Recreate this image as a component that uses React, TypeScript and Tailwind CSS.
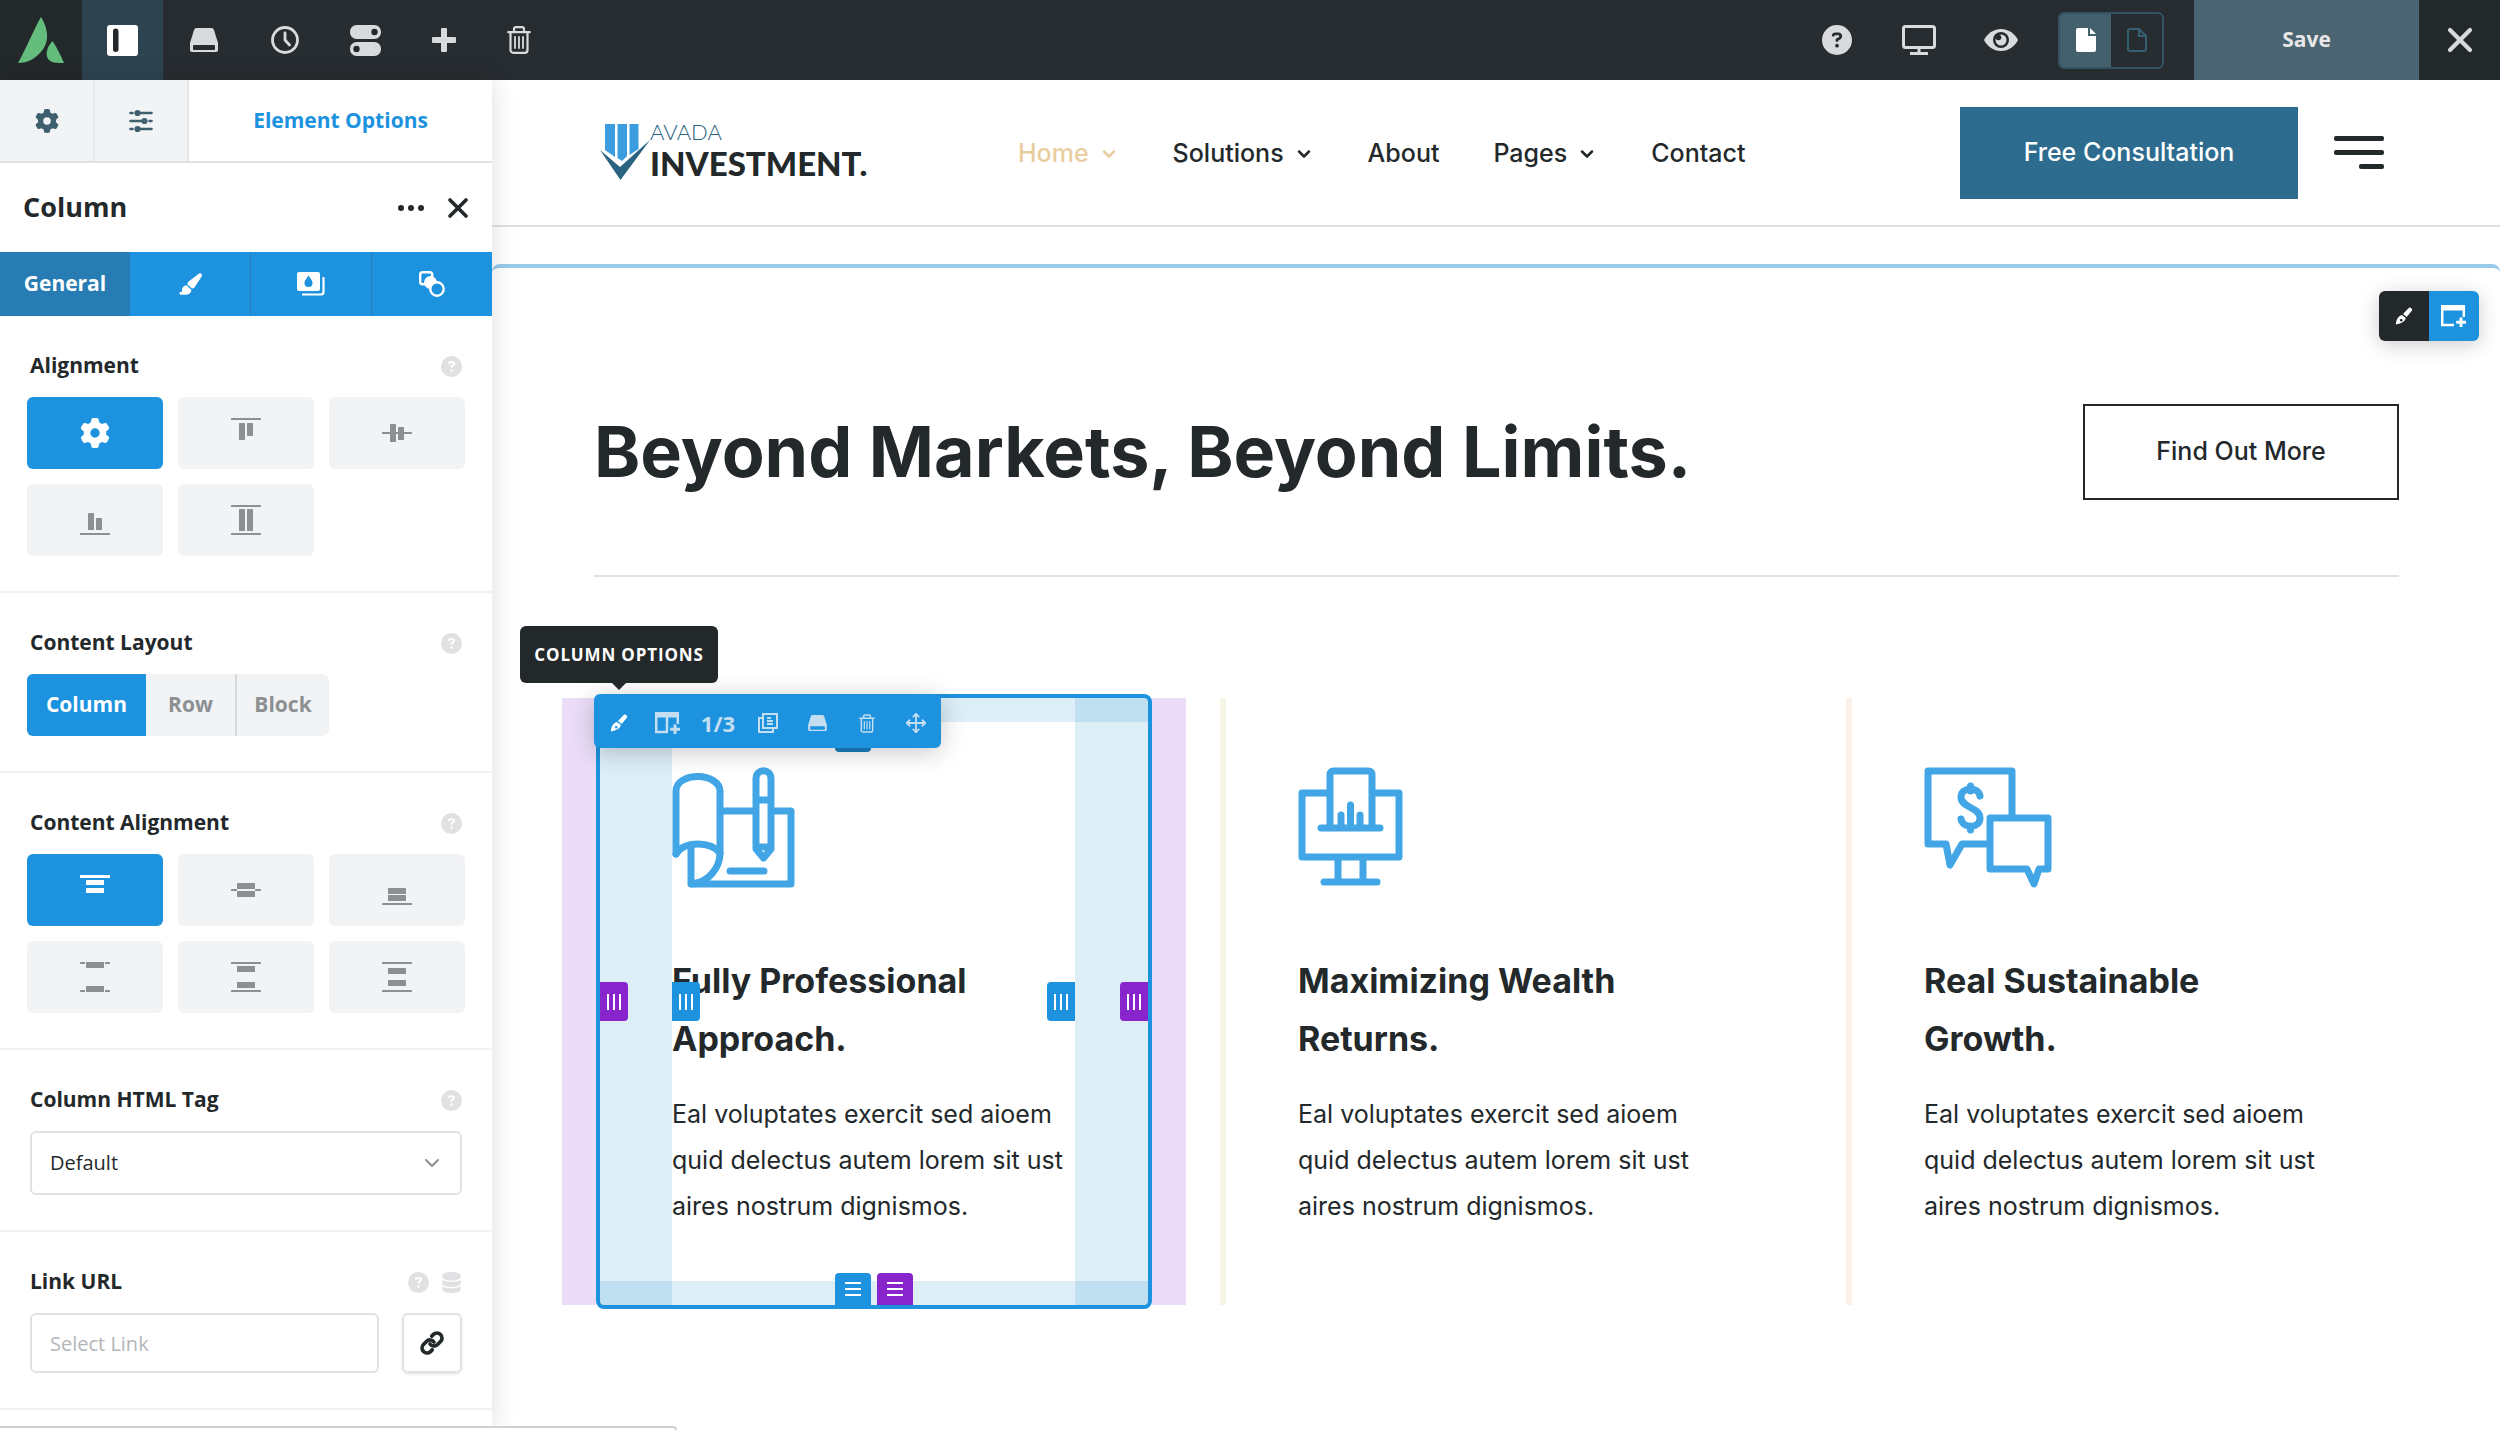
import type { ReactNode } from 'react'
import { FaCircleQuestion, FaDatabase, FaGear, FaPaintbrush } from 'react-icons/fa6'
import { ChevronDown, Link, Move, X } from 'lucide-react'

type Rect = [x: number, y: number, w: number, h: number]

const alignment: Rect[][] = [
  [[0, 0, 30, 2], [8, 5, 6, 17], [16, 5, 6, 13]],
  [[0, 14, 30, 2], [8, 6, 6, 18], [16, 9, 6, 13]],
  [[0, 28, 30, 2], [8, 8, 6, 17], [16, 13, 6, 12]],
  [[0, 0, 30, 2], [0, 28, 30, 2], [8, 4, 6, 22], [16, 4, 6, 22]],
]

const contentAlignment: Rect[][] = [
  [[0, 0, 30, 3], [6, 5, 18, 5], [6, 13, 18, 5]],
  [[0, 14, 6, 2], [24, 14, 6, 2], [6, 8, 18, 6], [6, 16, 18, 6]],
  [[0, 28, 30, 2], [6, 13, 18, 6], [6, 20, 18, 6]],
  [[0, 0, 5, 2], [25, 0, 5, 2], [6, 0, 18, 6], [0, 28, 5, 2], [25, 28, 5, 2], [6, 24, 18, 6]],
  [[0, 0, 30, 2], [0, 28, 30, 2], [6, 4, 18, 6], [6, 20, 18, 6]],
  [[0, 0, 30, 2], [0, 28, 30, 2], [6, 6, 18, 6], [6, 18, 18, 6]],
]

const body = 'Eal voluptates exercit sed aioem quid delectus autem lorem sit ust aires nostrum dignismos.'

function BarsIcon({ rects }: { rects: Rect[] }) {
  return (
    <svg viewBox="0 0 30 30" className="size-[30px]" fill="currentColor">
      {rects.map(([x, y, width, height], i) => (
        <rect key={i} x={x} y={y} width={width} height={height} rx="0.5" />
      ))}
    </svg>
  )
}

function DriveIcon({ className }: { className: string }) {
  return (
    <svg viewBox="0 0 28 24" className={className} fill="currentColor">
      <path d="M7 0h14a3 3 0 0 1 3 2l4 13H0L4 2a3 3 0 0 1 3-2z" />
      <path
        fillRule="evenodd"
        d="M0 14h28v8a2 2 0 0 1-2 2H2a2 2 0 0 1-2-2zM4 17a1 1 0 0 0-1 1v3a1 1 0 0 0 1 1h20a1 1 0 0 0 1-1v-3a1 1 0 0 0-1-1z"
      />
    </svg>
  )
}

function TrashIcon({ className }: { className: string }) {
  return (
    <svg viewBox="0 0 24 28" className={className} fill="none" stroke="currentColor" strokeWidth="2.2" strokeLinecap="round" strokeLinejoin="round">
      <path d="M1.2 6.2h21.6M7 6V3.200a2 2 0 0 1 2-2h6a2 2 0 0 1 2 2V6M3.500 6.500v17.500a2.800 2.800 0 0 0 2.800 2.800h11.400a2.800 2.800 0 0 0 2.800-2.800V6.500" />
      <path strokeWidth="1.800" d="M8 11v11M12 11v11M16 11v11" />
    </svg>
  )
}

function PenIcon() {
  return (
    <svg viewBox="0 0 18 18" className="size-[18px]" fill="currentColor">
      <path d="M14 .8c1.200-1 3.900 1 3 2.700L11.700 10 8 7z" />
      <path fillRule="evenodd" d="M7 8l3.800 3.100c-.6 3-3.800 5.600-10 6.400C1.300 12 3.500 8.800 7 8zm-.8 4a1.300 1.300 0 1 0 .1 2.600 1.300 1.300 0 0 0-.1-2.600z" />
    </svg>
  )
}

function AddContainerIcon({ split, className }: { split?: boolean; className: string }) {
  return (
    <svg viewBox="0 0 26 22" className={className} fill="none" stroke="currentColor" strokeWidth="2.500">
      <path d="M13 19.900H1.200V1.100h21.600V12" />
      <path fill="currentColor" stroke="none" d="M0 0h24v5.500H0z" />
      {split && <path d="M12 4v16" />}
      <path strokeWidth="3" d="M20 12.500v9.500M15.200 17.200H25" />
    </svg>
  )
}

function BarButton({ label, active, children }: { label: string; active?: boolean; children: ReactNode }) {
  return (
    <button aria-label={label} className={active ? 'flex w-[81px] items-center justify-center bg-[#2d434f] text-white' : 'flex w-[81px] items-center justify-center text-[#d9dadc]'}>
      {children}
    </button>
  )
}

function TopBar() {
  return (
    <header className="flex h-20 shrink-0 bg-[#272c30] text-[#d9dadc]">
      <a href="#" aria-label="Avada" className="flex w-[82px] items-center justify-center bg-[#23282b]">
        <svg viewBox="0 0 46 46" className="size-[46px]" fill="#65bd7d">
          <path d="M23 0c8 13 9 27-2 37-6 6-13 9-21 9C8 32 16 12 23 0z" />
          <path d="M34.500 24c4 6 8 14 11.500 22-7 0-12 0-15-3-4-4-3-12 3.500-19z" />
        </svg>
      </a>
      <BarButton label="Toggle sidebar" active>
        <svg viewBox="0 0 31 31" className="size-[31px]">
          <rect width="31" height="31" rx="3" fill="#fff" />
          <rect x="6" y="3.500" width="5.500" height="23.500" rx="2.700" fill="#23282b" />
        </svg>
      </BarButton>
      <BarButton label="Library"><DriveIcon className="h-6 w-7" /></BarButton>
      <BarButton label="History">
        <svg viewBox="0 0 28 28" className="size-7" fill="none" stroke="currentColor" strokeWidth="2.800" strokeLinecap="round" strokeLinejoin="round">
          <circle cx="14" cy="14" r="12.500" />
          <path d="M14 7v7l4.500 5" />
        </svg>
      </BarButton>
      <BarButton label="Preferences">
        <svg viewBox="0 0 31 31" className="size-[31px]">
          <rect width="31" height="14" rx="6.500" fill="currentColor" />
          <rect y="17" width="31" height="14" rx="6.500" fill="currentColor" />
          <circle cx="24.500" cy="7" r="3.200" fill="#23282b" />
          <circle cx="6.500" cy="24" r="3.200" fill="#23282b" />
        </svg>
      </BarButton>
      <button aria-label="Add" className="flex w-[75px] items-center justify-center">
        <svg viewBox="0 0 24 24" className="size-6" fill="currentColor">
          <path d="M9 1a1 1 0 0 1 1-1h4a1 1 0 0 1 1 1v8h8a1 1 0 0 1 1 1v4a1 1 0 0 1-1 1h-8v8a1 1 0 0 1-1 1h-4a1 1 0 0 1-1-1v-8H1a1 1 0 0 1-1-1v-4a1 1 0 0 1 1-1h8z" />
        </svg>
      </button>
      <button aria-label="Clear layout" className="flex w-[75px] items-center justify-center"><TrashIcon className="h-7 w-6" /></button>
      <div className="flex flex-1 items-center justify-end">
        <button aria-label="Help" className="flex w-20 justify-center"><FaCircleQuestion className="size-[30px]" /></button>
        <button aria-label="Responsive view" className="flex w-[83px] justify-center">
          <svg viewBox="0 0 34 30" className="h-[30px] w-[34px]" fill="none" stroke="currentColor" strokeWidth="3">
            <rect x="1.500" y="1.500" width="31" height="21" rx="2" />
            <path d="M17 23v5M8 28.500h18" />
          </svg>
        </button>
        <button aria-label="Preview" className="flex w-[82px] justify-center">
          <svg viewBox="0 0 34 22" className="h-[22px] w-[34px]">
            <path d="M17 0c8 0 14 5 17 11-3 6-9 11-17 11S3 17 0 11C3 5 9 0 17 0z" fill="currentColor" />
            <circle cx="17" cy="11" r="8" fill="#23282b" />
            <circle cx="17" cy="11" r="5.500" fill="currentColor" />
            <circle cx="14.500" cy="8.500" r="2.800" fill="#23282b" />
          </svg>
        </button>
        <div className="mx-4 flex h-[57px] w-[106px] overflow-hidden rounded-md border-2 border-[#345361]">
          <button aria-label="Published" className="flex flex-1 items-center justify-center bg-[#44606d] text-white">
            <svg viewBox="0 0 20 24" className="h-6 w-5" fill="currentColor">
              <path d="M2 0h10v8h8v14a2 2 0 0 1-2 2H2a2 2 0 0 1-2-2V2a2 2 0 0 1 2-2z" />
              <path d="M14 0l6 6h-6z" />
            </svg>
          </button>
          <button aria-label="Draft" className="flex flex-1 items-center justify-center text-[#345f70]">
            <svg viewBox="0 0 20 24" className="h-6 w-5" fill="none" stroke="currentColor" strokeWidth="2">
              <path d="M1 3a2 2 0 0 1 2-2h9l7 7v13a2 2 0 0 1-2 2H3a2 2 0 0 1-2-2zM12 1v7h7" />
            </svg>
          </button>
        </div>
        <button className="ml-[14px] h-full w-[225px] bg-[#4a6471] text-[21px] font-bold text-[#e8e6e6]">Save</button>
        <button aria-label="Close" className="flex h-full w-[81px] items-center justify-center bg-[#23282b]">
          <X className="size-10" strokeWidth={2.5} />
        </button>
      </div>
    </header>
  )
}

function Field({ title, htmlFor, extra, children }: { title: string; htmlFor?: string; extra?: ReactNode; children: ReactNode }) {
  return (
    <section className="border-b-2 border-[#f2f2f4] px-[27px] pt-9 pb-[35px]">
      <div className="mb-[17px] flex h-7 items-center justify-between px-[3px]">
        {htmlFor ? <label htmlFor={htmlFor} className="text-[21px] font-bold">{title}</label> : <h3 className="text-[21px] font-bold">{title}</h3>}
        <span className="flex gap-3 text-[#e0e1e3]">
          <FaCircleQuestion className="size-[21px]" />
          {extra}
        </span>
      </div>
      {children}
    </section>
  )
}

function Tile({ label, active, children }: { label: string; active?: boolean; children: ReactNode }) {
  return (
    <button aria-label={label} className={active ? 'flex h-[72px] items-center justify-center rounded-md bg-[#1d92de] text-white' : 'flex h-[72px] items-center justify-center rounded-md bg-[#f2f3f5] text-[#8c9092]'}>
      {children}
    </button>
  )
}

function Sidebar() {
  return (
    <aside className="relative z-10 w-[492px] shrink-0 bg-white text-[#23282b] shadow-[0_0_24px_rgba(0,0,0,0.14)]">
      <nav className="flex h-[83px] border-b-2 border-[#e0e1e3] text-[#3e5f6e]">
        <button aria-label="Settings" className="flex w-[95px] items-center justify-center border-r-2 border-[#e6e7e9] bg-[#f2f3f5]"><FaGear className="size-6" /></button>
        <button aria-label="Page options" className="flex w-[94px] items-center justify-center border-r-2 border-[#e6e7e9] bg-[#f2f3f5]">
          <svg viewBox="0 0 24 24" className="size-6" fill="none" stroke="currentColor" strokeWidth="2.600" strokeLinecap="round">
            <path d="M1.500 4h2M9 4h13.500M1.500 12h13M20.500 12h2M1.500 20h2M9 20h13.500" />
            <circle cx="8.500" cy="4" r="1.800" />
            <circle cx="15.500" cy="12" r="1.800" />
            <circle cx="8.500" cy="20" r="1.800" />
          </svg>
        </button>
        <button className="flex-1 text-[21px] font-bold text-[#1d92de]">Element Options</button>
      </nav>
      <div className="flex h-[89px] items-center pr-[18px] pl-[23px]">
        <h2 className="flex-1 text-[27px] font-bold">Column</h2>
        <button aria-label="More" className="mr-[18px]">
          <svg viewBox="0 0 26 6" className="h-1.5 w-[26px]" fill="currentColor">
            <circle cx="3" cy="3" r="3" />
            <circle cx="13" cy="3" r="3" />
            <circle cx="23" cy="3" r="3" />
          </svg>
        </button>
        <button aria-label="Close panel"><X className="size-8" strokeWidth={2.75} /></button>
      </div>
      <nav className="flex h-16 bg-[#1d92de] text-white">
        <button className="w-[130px] bg-[#277cb4] text-[21px] font-bold">General</button>
        <button aria-label="Design" className="flex flex-1 items-center justify-center"><FaPaintbrush className="size-6" /></button>
        <button aria-label="Background" className="flex flex-1 items-center justify-center border-l border-[#2a7fb8]">
          <svg viewBox="0 0 28 24" className="h-6 w-7" fill="none">
            <rect width="23" height="19" rx="2" fill="currentColor" />
            <path d="M11.500 3.500c2 3 4 5 4 7.500a4 4 0 0 1-8 0c0-2.500 2-4.500 4-7.500z" fill="#1d92de" />
            <path d="M26.500 5v15a2.500 2.500 0 0 1-2.500 2.500H5" stroke="currentColor" strokeWidth="2.200" />
          </svg>
        </button>
        <button aria-label="Extras" className="flex flex-1 items-center justify-center border-l border-[#2a7fb8]">
          <svg viewBox="0 0 26 26" className="size-[26px]" fill="none" stroke="currentColor" strokeWidth="2.400">
            <rect x="1.200" y="1.200" width="12" height="12" rx="2.500" />
            <circle cx="11.500" cy="11.500" r="6.500" fill="currentColor" stroke="none" />
            <circle cx="18" cy="18" r="6.700" fill="#1d92de" />
          </svg>
        </button>
      </nav>

      <Field title="Alignment">
        <div className="grid grid-cols-3 gap-[15px]">
          <Tile label="Default" active><FaGear className="size-[30px]" /></Tile>
          {alignment.map((rects, i) => (
            <Tile key={i} label={`Alignment ${i + 1}`}><BarsIcon rects={rects} /></Tile>
          ))}
        </div>
      </Field>
      <Field title="Content Layout">
        <div className="flex h-[62px] w-fit overflow-hidden rounded-md bg-[#f2f3f5] text-[21px] font-bold text-[#8c9092]">
          <button className="w-[119px] bg-[#1d92de] text-white">Column</button>
          <button className="w-[89px]">Row</button>
          <button className="w-[94px] border-l-2 border-[#d9dadc]">Block</button>
        </div>
      </Field>
      <Field title="Content Alignment">
        <div className="grid grid-cols-3 gap-[15px]">
          {contentAlignment.map((rects, i) => (
            <Tile key={i} label={`Content alignment ${i + 1}`} active={i === 0}><BarsIcon rects={rects} /></Tile>
          ))}
        </div>
      </Field>
      <Field title="Column HTML Tag" htmlFor="html-tag">
        <div className="relative mx-[3px]">
          <select id="html-tag" className="h-16 w-full appearance-none rounded-md border-2 border-[#e0e1e3] bg-white px-[18px] text-xl">
            <option>Default</option>
          </select>
          <ChevronDown className="pointer-events-none absolute top-5 right-[18px] size-6 text-[#8c9092]" />
        </div>
      </Field>
      <Field title="Link URL" htmlFor="link-url" extra={<FaDatabase className="size-[21px]" />}>
        <div className="mx-[3px] flex gap-[23px]">
          <input id="link-url" placeholder="Select Link" className="h-[60px] min-w-0 flex-1 rounded-md border-2 border-[#e0e1e3] px-[18px] text-xl placeholder:text-[#b4b6b9]" />
          <button aria-label="Choose link" className="flex size-[60px] items-center justify-center rounded-md border-2 border-[#e0e1e3] shadow-sm"><Link className="size-6" strokeWidth={3.75} /></button>
        </div>
      </Field>
    </aside>
  )
}

function Logo() {
  return (
    <a href="#" className="flex items-start font-['Lato',sans-serif]">
      <svg viewBox="0 0 50 56" className="h-14 w-[50px]">
        <path d="M5 0h10v33L5 26zM17.500 0h9.500v32l-5 5-4.500-3zM29.500 0h9v25l-9 6z" fill="#3a9de0" />
        <path d="M0 26l20 17L50 16 20.500 56z" fill="#2a6380" />
      </svg>
      <span className="flex flex-col">
        <span className="text-[22px] leading-4 font-light text-[#2a6380]">AVADA</span>
        <span className="mt-1 text-[33px] leading-[38px] font-black text-[#23282b]">INVESTMENT.</span>
      </span>
    </a>
  )
}

function SiteHeader() {
  return (
    <div className="flex h-[147px] items-center border-b-2 border-[#e0e0e2] pr-[116px] pl-[108px]">
      <div className="w-[418px]"><Logo /></div>
      <nav className="flex flex-1 items-center gap-[54px] pt-0.5 text-[25px] font-medium">
        <a href="#" className="flex items-center gap-2.5 text-[#e9cd9f]">Home <ChevronDown className="size-5" strokeWidth={3} /></a>
        <a href="#" className="flex items-center gap-2.5">Solutions <ChevronDown className="size-5" strokeWidth={3} /></a>
        <a href="#">About</a>
        <a href="#" className="flex items-center gap-2.5">Pages <ChevronDown className="size-5" strokeWidth={3} /></a>
        <a href="#">Contact</a>
      </nav>
      <button className="h-[92px] w-[338px] bg-[#2d6c8f] text-[25px] font-medium text-white">Free Consultation</button>
      <button aria-label="Open menu" className="ml-9">
        <svg viewBox="0 0 50 33" className="h-[33px] w-[50px]" fill="currentColor">
          <rect width="50" height="5" rx="2" />
          <rect y="14" width="50" height="5" rx="2" />
          <rect x="25" y="28" width="25" height="5" rx="2" />
        </svg>
      </button>
    </div>
  )
}

function BookIcon() {
  return (
    <svg viewBox="0 0 123 121" className="h-[121px] w-[123px]" fill="none" stroke="#42a5e6" strokeWidth="7" strokeLinejoin="round" strokeLinecap="round">
      <path d="M4 87V24C4 15 14 9.500 26 9.500S48 16 48 24v62c0 14-11 30-29 31V81" />
      <path d="M4 87c5-8 13-10 22-10 10 0 18 4 22 9" />
      <path d="M50 44h31M103 44h16v73H20M58 104h34" />
      <path d="M84 82V12c0-11 15-11 15 0v70l-7.500 9zM84 33h15M84 80h15" />
    </svg>
  )
}

function MonitorIcon() {
  return (
    <svg viewBox="0 0 105 121" className="h-[121px] w-[105px]" fill="none" stroke="#42a5e6" strokeWidth="7" strokeLinejoin="round" strokeLinecap="round">
      <path d="M30 26H4v64h97V26H75M32 60V8q0-4 4-4h34q4 0 4 4v52M23 61h59" />
      <path d="M43 59V48M52.500 59V38M62 59V48M40 91v22M65 91v22M26 115h53" />
    </svg>
  )
}

function ChatIcon() {
  return (
    <svg viewBox="0 0 128 121" className="h-[121px] w-[128px]" fill="none" stroke="#42a5e6" strokeWidth="7" strokeLinejoin="round" strokeLinecap="round">
      <path d="M64 77H38L26 98l-4-21H4V4h84v44" />
      <path d="M66 51h58v51h-9l-5 15-7-15H66z" />
      <path d="M56 29c-2-10-19-9-19 1 0 11 19 10 19 21 0 11-17 11-19 1M46.500 19v5M46.500 59v4" />
    </svg>
  )
}

function ColumnBody({ icon, title }: { icon: ReactNode; title: [string, string] }) {
  return (
    <>
      {icon}
      <h3 className="mt-16 text-[34px] leading-[58px] font-bold whitespace-nowrap">
        {title[0]}
        <br />
        {title[1]}
      </h3>
      <p className="mt-[23px] max-w-[404px] text-[25px] leading-[46px]">{body}</p>
    </>
  )
}

// drag handle; lines run along the edge it resizes
function Handle({ label, horizontal, className }: { label: string; horizontal?: boolean; className: string }) {
  return (
    <button aria-label={label} className={`absolute flex items-center justify-center text-white ${className}`}>
      <svg viewBox="0 0 16 16" className="size-4" stroke="currentColor" strokeWidth="2">
        <path d={horizontal ? 'M0 2h16M0 8h16M0 14h16' : 'M2 0v16M8 0v16M14 0v16'} />
      </svg>
    </button>
  )
}

function ColumnOverlay() {
  return (
    <>
      <div className="absolute inset-y-0 -left-8 w-[34px] bg-[#ebddf8]" />
      <div className="absolute inset-y-0 -right-[34px] w-[34px] bg-[#ebddf8]" />
      <div className="absolute -inset-y-1 right-0 left-0.5 rounded-lg border-4 border-[#1d92de]">
        <div className="absolute inset-y-0 left-0 w-[72px] bg-[#1a8acb]/15" />
        <div className="absolute inset-y-0 right-0 w-[73px] bg-[#1a8acb]/15" />
        <div className="absolute inset-x-0 top-0 h-6 bg-[#1a8acb]/15" />
        <div className="absolute inset-x-0 bottom-0 h-6 bg-[#1a8acb]/15" />
      </div>
    </>
  )
}

function ColumnControls() {
  return (
    <>
      <Handle label="Left margin" className="top-[284px] left-1.5 h-[39px] w-7 rounded-r bg-[#8825cc]" />
      <Handle label="Left padding" className="top-[284px] left-[78px] h-[39px] w-7 rounded-r bg-[#1d92de]" />
      <Handle label="Right padding" className="top-[284px] right-[77px] h-[39px] w-7 rounded-l bg-[#1d92de]" />
      <Handle label="Right margin" className="top-[284px] right-1 h-[39px] w-7 rounded-l bg-[#8825cc]" />
      <Handle label="Bottom padding" horizontal className="bottom-0 left-[241px] h-8 w-9 rounded-t bg-[#1d92de]" />
      <Handle label="Bottom margin" horizontal className="bottom-0 left-[283px] h-8 w-9 rounded-t bg-[#8825cc]" />
      <div className="absolute top-10 left-[241px] h-[14px] w-9 rounded-b bg-[#1c7fc0]" />
      <div className="absolute -top-1 left-0 flex h-[54px] w-[347px] items-center rounded-md bg-[#1d92de] pt-1 text-[#c4def1] shadow-[0_4px_24px_rgba(0,0,0,0.22)]">
        <button aria-label="Column options" className="flex flex-1 justify-center text-white"><PenIcon /></button>
        <button aria-label="Add column" className="flex flex-1 justify-center"><AddContainerIcon split className="h-[22px] w-[26px]" /></button>
        <button className="flex-1 text-[22px] font-bold">1/3</button>
        <button aria-label="Clone column" className="flex flex-1 justify-center">
          <svg viewBox="0 0 20 20" className="size-5" fill="none" stroke="currentColor" strokeWidth="2">
            <path d="M5 1h14v14H5zM5 5H1v14h14v-4M9 8h6M9 5h4M9 11h6" />
          </svg>
        </button>
        <button aria-label="Save column" className="flex flex-1 justify-center"><DriveIcon className="h-4 w-[19px]" /></button>
        <button aria-label="Delete column" className="flex flex-1 justify-center"><TrashIcon className="h-[19px] w-4" /></button>
        <button aria-label="Drag column" className="flex flex-1 justify-center"><Move className="size-[22px]" /></button>
      </div>
      <div role="tooltip" className="absolute -top-[72px] -left-[74px] flex h-[57px] w-[198px] items-center justify-center rounded-md bg-[#23282b] text-[17px] font-bold tracking-wider whitespace-nowrap text-white">
        COLUMN OPTIONS
        <svg viewBox="0 0 16 8" className="absolute top-[56px] left-[91px] h-2 w-4" fill="#23282b"><path d="M0 0h16L8 8z" /></svg>
      </div>
    </>
  )
}

function Canvas() {
  return (
    <main className="min-w-0 flex-1 bg-white font-['Inter',sans-serif] text-[#23282b]">
      <SiteHeader />
      <section className="relative mt-[37px] rounded-t-lg border-t-4 border-[#98caec]">
        <div className="absolute top-[23px] right-[21px] flex h-[50px] w-[100px] overflow-hidden rounded-md text-white shadow-[0_4px_20px_rgba(0,0,0,0.2)]">
          <button aria-label="Container options" className="flex flex-1 items-center justify-center bg-[#23282b]"><PenIcon /></button>
          <button aria-label="Add container" className="flex flex-1 items-center justify-center bg-[#1d92de]"><AddContainerIcon className="h-[22px] w-[26px]" /></button>
        </div>
        <div className="mr-[101px] ml-[102px] flex items-center justify-between border-b-2 border-[#e0e1e3] pt-[136px] pb-[75px]">
          <h1 className="text-[70px] leading-[96px] font-bold">Beyond Markets, Beyond Limits.</h1>
          <button className="h-24 w-[316px] border-2 border-[#23282b] text-[25px] font-medium">Find Out More</button>
        </div>
        <div className="mt-[121px] mr-24 ml-[102px] grid grid-cols-3 gap-[68px]">
          <article className="relative border-l-6 border-transparent">
            <div className="absolute inset-y-0 right-0 -left-1.5"><ColumnOverlay /></div>
            <div className="relative pt-[69px] pb-[76px] pl-[72px]">
              <ColumnBody icon={<BookIcon />} title={['Fully Professional', 'Approach.']} />
            </div>
            <div className="absolute inset-y-0 right-0 -left-1.5 font-['Open_Sans',sans-serif]"><ColumnControls /></div>
          </article>
          <article className="border-l-6 border-[#f6f5e6] pt-[69px] pb-[76px] pl-[72px]">
            <ColumnBody icon={<MonitorIcon />} title={['Maximizing Wealth', 'Returns.']} />
          </article>
          <article className="border-l-6 border-[#fbf1e9] pt-[69px] pb-[76px] pl-[72px]">
            <ColumnBody icon={<ChatIcon />} title={['Real Sustainable', 'Growth.']} />
          </article>
        </div>
      </section>
    </main>
  )
}

export default function App() {
  return (
    <div className="relative flex min-h-screen flex-col bg-white font-['Open_Sans',sans-serif]">
      <TopBar />
      <div className="flex flex-1">
        <Sidebar />
        <Canvas />
      </div>
      <div className="absolute bottom-0 left-0 z-20 h-1 w-[677px] rounded-tr-md border-t-2 border-r-2 border-[#cfd0d3] bg-white" />
    </div>
  )
}
